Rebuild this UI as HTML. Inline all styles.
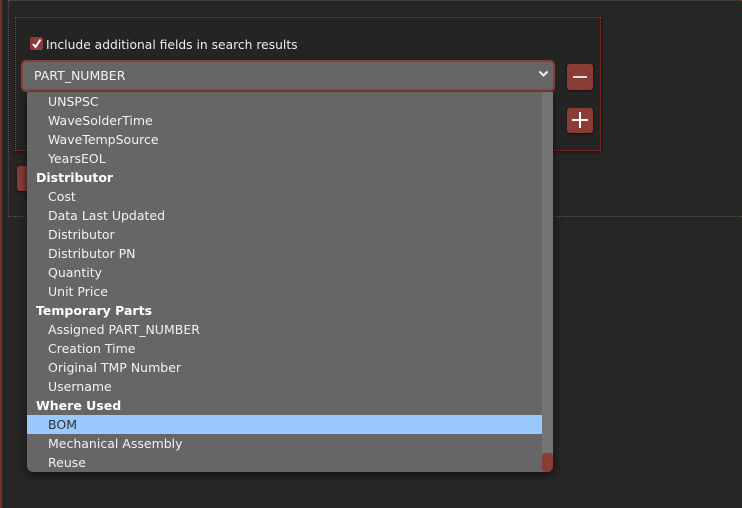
<!DOCTYPE html>
<html><head><meta charset="utf-8"><style>
*{margin:0;padding:0;box-sizing:border-box}
body{width:742px;height:508px;background:#262626;position:relative;overflow:hidden;font-family:"DejaVu Sans","Liberation Sans",sans-serif;font-size:12.5px;color:#eee}
.abs{position:absolute}
.btn{position:absolute;background:#8a3c35;border-radius:3px;box-shadow:0 1px 2px #111}
.opt{height:19px;line-height:19px;padding-left:21px;color:#f2f2f2;white-space:nowrap}
.grp{height:19px;line-height:19px;padding-left:9px;font-weight:bold;color:#fff}
.sel{background:#99c9ff;color:#333}
</style></head><body>
<div class="abs" style="left:0;top:0;width:2px;height:508px;background:#7a302a"></div>
<div class="abs" style="left:8px;top:0;width:734px;height:0;border-top:1px dotted #8a3c35"></div>
<div class="abs" style="left:8px;top:0;width:0;height:216px;border-left:1px dotted #8a3c35"></div>
<div class="abs" style="left:8px;top:216px;width:734px;border-top:1px dotted #8a3c35"></div>
<div class="abs" style="left:15px;top:17px;width:586px;height:134px;border:1px dotted #8a3c35;background:#242424;box-shadow:0 1px 3px #111"></div>
<div class="abs" style="left:30px;top:37px;width:13px;height:13px;background:#8a3c35;border-radius:2px"></div>
<svg class="abs" style="left:30px;top:37px" width="13" height="13"><path d="M3 7 L5.5 10 L10.5 2.5" stroke="#fff" stroke-width="2" fill="none"/></svg>
<div class="abs" style="left:46px;top:38px;font-size:12.3px;color:#eee">Include additional fields in search results</div>
<div class="abs" style="left:21px;top:60px;width:534px;height:32px;border:2px solid #8a3c35;border-radius:5px;background:#666"></div>
<div class="abs" style="left:34px;top:68px;font-size:12.5px;color:#f2f2f2">PART_NUMBER</div>
<svg class="abs" style="left:538px;top:70px" width="11" height="8"><path d="M1.5 1.5 L5.5 5.5 L9.5 1.5" stroke="#eee" stroke-width="2" fill="none"/></svg>
<div class="btn" style="left:567px;top:64px;width:26px;height:26px"></div>
<div class="abs" style="left:573px;top:76px;width:14px;height:2px;background:#ddd"></div>
<div class="btn" style="left:567px;top:108px;width:26px;height:25px"></div>
<div class="abs" style="left:572px;top:119px;width:16px;height:2px;background:#fff"></div>
<div class="abs" style="left:579px;top:112px;width:2px;height:16px;background:#fff"></div>
<div class="btn" style="left:17px;top:166px;width:14px;height:25px;border-radius:3px 0 0 3px"></div>
<div class="abs" style="left:27px;top:92px;width:526px;height:380px;background:#666;border-radius:0 0 6px 6px;overflow:hidden;box-shadow:0 3px 8px #111">
<div style="width:515px;position:absolute;left:0;top:0">
<div class="opt">UNSPSC</div><div class="opt">WaveSolderTime</div><div class="opt">WaveTempSource</div><div class="opt">YearsEOL</div>
<div class="grp">Distributor</div>
<div class="opt">Cost</div><div class="opt">Data Last Updated</div><div class="opt">Distributor</div><div class="opt">Distributor PN</div><div class="opt">Quantity</div><div class="opt">Unit Price</div>
<div class="grp">Temporary Parts</div>
<div class="opt">Assigned PART_NUMBER</div><div class="opt">Creation Time</div><div class="opt">Original TMP Number</div><div class="opt">Username</div>
<div class="grp">Where Used</div>
<div class="opt sel">BOM</div><div class="opt">Mechanical Assembly</div><div class="opt">Reuse</div>
</div>
<div style="position:absolute;left:515px;top:0;width:11px;height:380px;background:#747474"></div>
<div style="position:absolute;left:515px;top:361px;width:11px;height:19px;background:#8a3c35;border-radius:3px 3px 6px 3px"></div>
</div>
</body></html>
